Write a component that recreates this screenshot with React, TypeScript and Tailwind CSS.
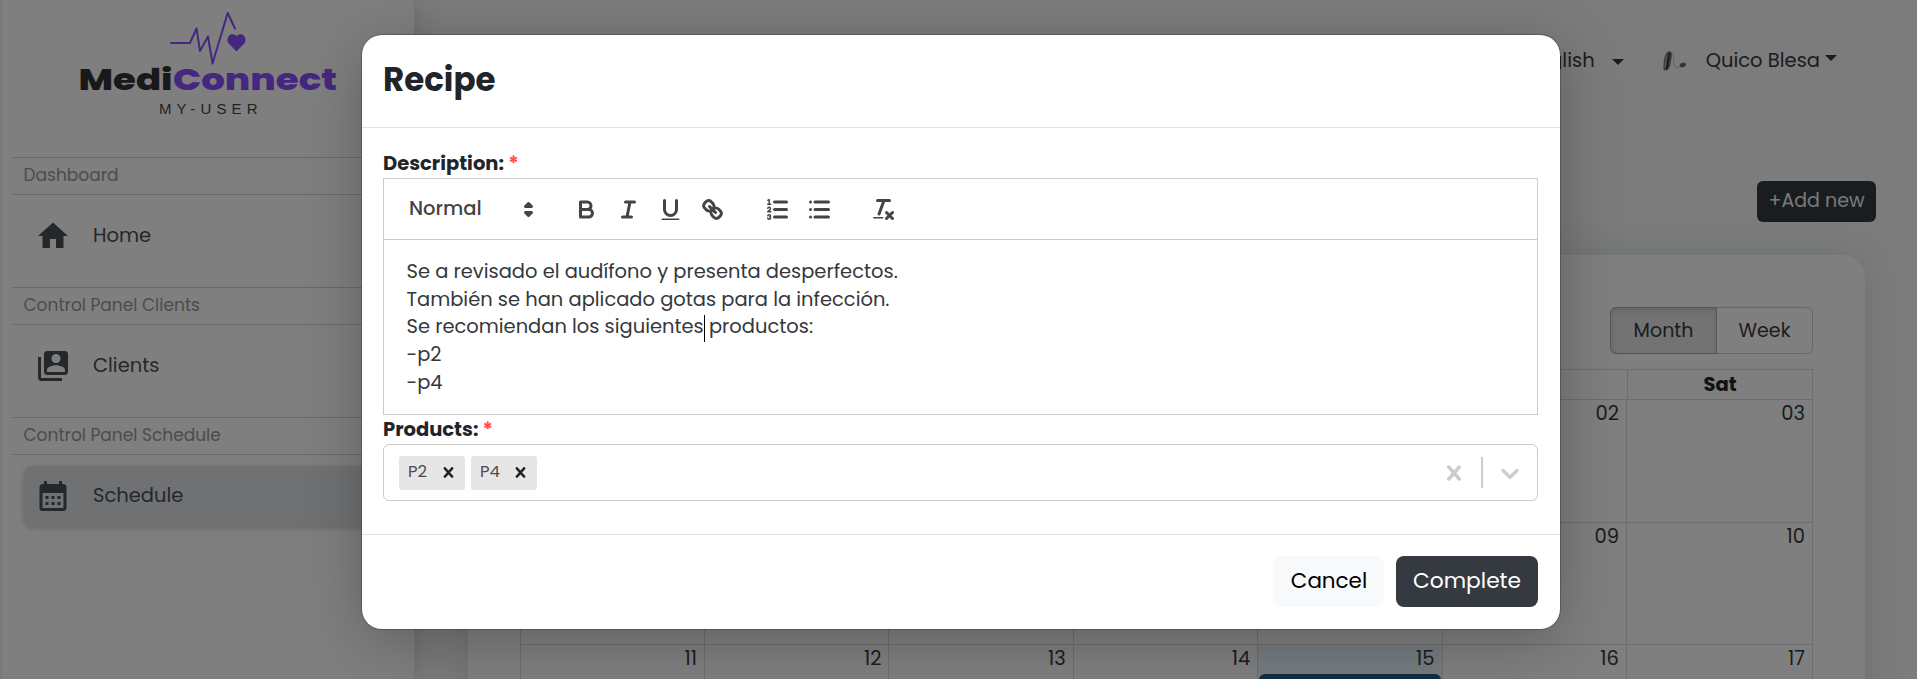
import React from "react";
import { MdHome, MdCalendarMonth } from "react-icons/md";

const SANS = "font-['Poppins','Inter',sans-serif]";

function Logo() {
  return (
    <svg width="280" height="110" viewBox="70 10 280 110" className="block">
      <polyline points="171,43 190,43 196.5,28.5 200,51 208,36.5 212.5,63.5 227.7,13 235,28.5" fill="none" stroke="#8a4fff" strokeWidth="2" strokeLinecap="round" strokeLinejoin="round" />
      <path d="M236.5 51.5l-7.3-7.4c-2.4-2.500-2.300-6.200-.1-8.400 2.100-2.100 5.500-1.900 7.400.5 1.900-2.400 5.300-2.600 7.400-.5 2.200 2.200 2.300 5.900-.1 8.400z" fill="#8a4fff" />
      <text x="78.500" y="90" textLength="94" lengthAdjust="spacingAndGlyphs" fontFamily="Poppins, Inter" fontWeight="800" fontSize="30" fill="#333">Medi</text>
      <text x="173" y="90" textLength="164" lengthAdjust="spacingAndGlyphs" fontFamily="Poppins, Inter" fontWeight="800" fontSize="30" fill="#8a4fff">Connect</text>
      <text x="159" y="114" textLength="98.500" fontFamily="Liberation Sans" fontSize="15" fill="#444">MY-USER</text>
    </svg>
  );
}

function Section({ title, children }: { title: string; children: React.ReactNode }) {
  return (
    <section className="h-[130px]">
      <h2 className="h-[38px] border-y border-[#cfd1d3] pl-[10.500px] text-[17px] leading-[34px] text-[#999]">{title}</h2>
      <div className="pt-[10.500px] pl-[11px]">{children}</div>
    </section>
  );
}

function NavItem({ icon, label, active }: { icon: React.ReactNode; label: string; active?: boolean }) {
  return (
    <div className={"flex h-[60px] items-center rounded-lg pl-[11px] text-[19.500px] text-[#4a4f55] " + (active ? "bg-[#dee2e6] shadow-[0_2px_6px_rgba(0,0,0,0.2)]" : "")}>
      <span className="flex w-[58px] text-[#495057]">{icon}</span>
      {label}
    </div>
  );
}

function ClientsIcon() {
  return (
    <svg width="36" height="36" viewBox="0 0 24 24" fill="currentColor">
      <path d="M4 6H2v14c0 1.100.9 2 2 2h14v-2H4V6zm16-4H8c-1.100 0-2 .9-2 2v12c0 1.100.9 2 2 2h12c1.100 0 2-.9 2-2V4c0-1.100-.9-2-2-2zm-6 2c1.660 0 3 1.340 3 3s-1.340 3-3 3-3-1.340-3-3 1.340-3 3-3zm6 12H8v-1.500c0-1.990 4-3 6-3s6 1.010 6 3V16z" />
    </svg>
  );
}

function Sidebar() {
  return (
    <aside className="z-10 flex w-[414px] shrink-0 flex-col border-l-2 border-[#f0f0f0] bg-white pl-[11px] shadow-[0_0_30px_rgba(60,90,80,0.2)]">
      <div className="h-[157px] pt-[10px] pl-[57px]"><Logo /></div>
      <Section title="Dashboard"><NavItem icon={<MdHome size={36} />} label="Home" /></Section>
      <Section title="Control Panel Clients"><NavItem icon={<ClientsIcon />} label="Clients" /></Section>
      <Section title="Control Panel Schedule"><NavItem active icon={<MdCalendarMonth size={36} />} label="Schedule" /></Section>
    </aside>
  );
}

function Caret() {
  return <span className="block border-x-[6px] border-t-[6px] border-x-transparent border-t-[#343a40]" />;
}

function TopBar() {
  return (
    <header className="flex h-[120px] items-center justify-end pt-[2px] pr-[80px] text-[19.500px] text-[#343a40]">
      <span>English</span>
      <span className="mt-[1px] ml-[17px]"><Caret /></span>
      <svg width="26" height="22" viewBox="0 0 26 22" className="ml-[38px]">
        <path d="M1.500 20C1 12 2.500 3 6 1.500c4-1 4.500 2 3.500 7-1 6-1.500 11-5 12z" fill="#777" />
        <path d="M7.500 3C6 8 6.500 14 4.500 19" stroke="#3a3a3a" strokeWidth="1.800" fill="none" />
        <path d="M5 5C3.500 9 3.500 14 3 18" stroke="#bbb" strokeWidth="1" fill="none" />
        <path d="M10.500 2c3 4-1 14 4 15.500l4-1" stroke="#c4c4c4" fill="none" />
        <ellipse cx="20.800" cy="15" rx="3.200" ry="2.200" transform="rotate(-20 20.800 15)" fill="#666672" />
      </svg>
      <span className="ml-[18px]">Quico Blesa</span>
      <span className="mb-[6px] ml-[5px]"><Caret /></span>
    </header>
  );
}

const WEEKS = [
  ["28", "29", "30", "31", "01", "02", "03"],
  ["04", "05", "06", "07", "08", "09", "10"],
  ["11", "12", "13", "14", "15", "16", "17"],
];

function Calendar() {
  return (
    <div className="ml-[54px] h-[500px] w-[1397px] rounded-[24px] bg-white px-[52px] pt-[52px] text-[19.500px] text-[#373a3c] shadow-[0_0_40px_rgba(60,80,70,0.16)]">
      <div className="flex justify-end">
        <div className="flex h-[47px] w-[203px] rounded-md border border-[#ccc] text-[19px] leading-[45px]">
          <span className="-my-px -ml-px w-[107px] rounded-l-md border border-[#adadad] bg-[#e6e6e6] text-center shadow-[inset_0_3px_5px_rgba(0,0,0,0.125)]">Month</span>
          <span className="flex-1 text-center">Week</span>
        </div>
      </div>
      <div className="mt-[15px] border border-[#ddd]">
        <div className="grid h-[29px] grid-cols-[repeat(6,1fr)_185px] text-center font-bold leading-[29px] text-[#212529]">
          {["Sun", "Mon", "Tue", "Wed", "Thu", "Fri", "Sat"].map((d) => (
            <span key={d} className="border-l border-[#ddd] first:border-l-0">{d}</span>
          ))}
        </div>
        {WEEKS.map((week) => (
          <div key={week[0]} className="grid h-[122.500px] grid-cols-[183px_repeat(5,184.400px)_1fr] border-t border-[#ddd]">
            {week.map((d) => (
              <div key={d} className={"border-l border-[#ddd] text-right leading-[28px] first:border-l-0 " + (d === "15" ? "bg-[#eaf6ff]" : "")}>
                <div className="h-[29px] pr-[7px]">{d}</div>
                {d === "15" && <div className="mr-px ml-px h-[36px] rounded-md bg-[#265985]" />}
              </div>
            ))}
          </div>
        ))}
      </div>
    </div>
  );
}

const stroke = { fill: "none", stroke: "currentColor", strokeWidth: 2, strokeLinecap: "round" as const, strokeLinejoin: "round" as const };
const thin = { ...stroke, strokeWidth: 1 };

function Tool({ children }: { children: React.ReactNode }) {
  return (
    <span className="flex w-[42px] justify-center">
      <svg width="27" height="27" viewBox="0 0 18 18">{children}</svg>
    </span>
  );
}

function Toolbar() {
  return (
    <div className="flex h-[61px] items-center border-b border-[#ccc] pl-[25px] text-[#444]">
      <span className="w-[106px] pb-px text-[19.500px] font-medium">Normal</span>
      <svg width="27" height="27" viewBox="0 0 18 18">
        <g {...stroke} fill="currentColor">
          <polygon points="7 11 9 13 11 11 7 11" />
          <polygon points="7 7 9 5 11 7 7 7" />
        </g>
      </svg>
      <div className="ml-[23px] flex">
        <Tool>
          <path {...stroke} d="M5,4H9.5A2.5,2.5,0,0,1,12,6.5v0A2.5,2.5,0,0,1,9.5,9H5V4Z" />
          <path {...stroke} d="M5,9h5.5A2.5,2.5,0,0,1,13,11.5v0A2.5,2.5,0,0,1,10.5,14H5V9Z" />
        </Tool>
        <Tool>
          <path {...stroke} d="M7 4H13M5 14H11M8 14L10 4" />
        </Tool>
        <Tool>
          <path {...stroke} d="M5,3V9a4.012,4.012,0,0,0,4,4H9a4.012,4.012,0,0,0,4-4V3" />
          <rect fill="currentColor" x="3" y="15" width="12" height="1" rx="0.5" />
        </Tool>
        <Tool>
          <path {...stroke} d="M7 7L11 11" />
          <path {...stroke} d="M8.9,4.577a3.476,3.476,0,0,1,.36,4.679A3.476,3.476,0,0,1,4.577,8.9C3.185,7.5,2.035,6.4,4.217,4.217S7.5,3.185,8.9,4.577Z" />
          <path {...stroke} d="M13.423,9.1a3.476,3.476,0,0,0-4.679-.36,3.476,3.476,0,0,0,.36,4.679c1.392,1.392,2.5,2.542,4.679.36S14.815,10.5,13.423,9.1Z" />
        </Tool>
      </div>
      <div className="ml-[23px] flex">
        <Tool>
          <path {...stroke} d="M7 4H15M7 9H15M7 14H15" />
          <path {...thin} d="M2.500 5.500H4.500" />
          <path fill="currentColor" d="M3.5,6A0.5,0.5,0,0,1,3,5.5V3.085l-0.276.138A0.5,0.5,0,0,1,2.053,3c-0.124-.247-0.023-0.324.224-0.447l1-.5A0.5,0.5,0,0,1,4,2.5v3A0.5,0.5,0,0,1,3.5,6Z" />
          <path {...thin} d="M4.5,10.5h-2c0-.234,1.85-1.076,1.85-2.234A0.959,0.959,0,0,0,2.5,8.156" />
          <path {...thin} d="M2.5,14.846a0.959,0.959,0,0,0,1.85-.109A0.7,0.7,0,0,0,3.75,14a0.688,0.688,0,0,0,.6-0.736,0.959,0.959,0,0,0-1.85-.109" />
        </Tool>
        <Tool>
          <path {...stroke} d="M6 4H15M6 9H15M6 14H15M3 4H3.01M3 9H3.01M3 14H3.01" />
        </Tool>
      </div>
      <div className="ml-[22px] flex">
        <Tool>
          <path {...stroke} d="M5 3H13M6 12L9.35 3M11 11L15 15M15 11L11 15" />
          <rect fill="currentColor" x="2" y="14" width="7" height="1" rx="0.5" />
        </Tool>
      </div>
    </div>
  );
}

const CROSS = "M14.348 14.849c-0.469 0.469-1.229 0.469-1.697 0l-2.651-3.030-2.651 3.029c-0.469 0.469-1.229 0.469-1.697 0-0.469-0.469-0.469-1.229 0-1.697l2.758-3.150-2.759-3.152c-0.469-0.469-0.469-1.228 0-1.697s1.228-0.469 1.697 0l2.652 3.031 2.651-3.031c0.469-0.469 1.228-0.469 1.697 0s0.469 1.229 0 1.697l-2.758 3.152 2.758 3.150c0.469 0.469 0.469 1.229 0 1.698z";
const CHEVRON = "M4.516 7.548c0.436-0.446 1.043-0.481 1.576 0l3.908 3.747 3.908-3.747c0.533-0.481 1.141-0.446 1.574 0 0.436 0.445 0.408 1.197 0 1.615-0.406 0.418-4.695 4.502-4.695 4.502-0.217 0.223-0.502 0.335-0.787 0.335s-0.570-0.112-0.789-0.335c0 0-4.287-4.084-4.695-4.502s-0.436-1.170 0-1.615z";

function Glyph({ d, size }: { d: string; size: number }) {
  return <svg width={size} height={size} viewBox="0 0 20 20" fill="currentColor"><path d={d} /></svg>;
}

function Tag({ label }: { label: string }) {
  return (
    <span className="flex h-[34px] w-[66px] items-center justify-between rounded-[3px] bg-[#e6e6e6] pr-[6px] pl-[9px] text-[16.500px] text-[#4d4d4d]">
      {label}
      <span className="text-[#212529]"><Glyph d={CROSS} size={21} /></span>
    </span>
  );
}

function Label({ children }: { children: string }) {
  return (
    <div className="text-[19.500px] font-bold leading-[29px] text-[#212529]">
      {children} <span className="text-[#ff4d4d]">*</span>
    </div>
  );
}

function Modal() {
  return (
    <div className="mt-[35px] flex h-[594px] w-[1198px] flex-col rounded-[20px] bg-white text-[#212529] shadow-[0_12px_60px_rgba(0,0,0,0.25),0_0_0_1px_rgba(0,0,0,0.2)]">
      <div className="h-[93px] border-b border-[#dee2e6] pt-[21px] pl-[21px] text-[32.500px] font-bold leading-[48px]">Recipe</div>
      <div className="pt-[21px] pr-[22px] pl-[21px]">
        <Label>Description:</Label>
        <div className="h-[237px] border border-[#ccc]">
          <Toolbar />
          <div className="pt-[18px] pl-[22.500px] text-[19.470px] leading-[27.690px] text-[#33373b]">
            <p>Se a revisado el audífono y presenta desperfectos.</p>
            <p>También se han aplicado gotas para la infección.</p>
            <p>Se recomiendan los siguientes<span className="-my-[4px] mr-[-1px] inline-block h-[27px] w-px bg-black align-middle" /> productos:</p>
            <p>-p2</p>
            <p>-p4</p>
          </div>
        </div>
        <Label>Products:</Label>
        <div className="flex h-[57px] items-center rounded-md border border-[#ccc] pl-[15px] text-[#ccc]">
          <div className="flex flex-1 gap-[6px]"><Tag label="P2" /><Tag label="P4" /></div>
          <Glyph d={CROSS} size={30} />
          <span className="mx-[12px] h-[31px] w-[2px] bg-[#ccc]" />
          <span className="pr-[12px]"><Glyph d={CHEVRON} size={30} /></span>
        </div>
      </div>
      <div className="mt-auto flex h-[95px] items-start justify-end gap-[12px] border-t border-[#dee2e6] px-[22px] pt-[21px] text-[21.750px]">
        <button className="h-[51px] w-[110px] rounded-lg bg-[#f8f9fa] text-[21.450px] text-black">Cancel</button>
        <button className="h-[51px] w-[142px] rounded-lg bg-[#343a40] text-white">Complete</button>
      </div>
    </div>
  );
}

export default function App() {
  return (
    <div className={"relative h-[679px] w-full overflow-hidden bg-[#f8f9fa] " + SANS}>
      <div className="flex h-full">
        <Sidebar />
        <main className="flex-1">
          <TopBar />
          <div className="flex h-[135px] items-start justify-end pt-[61px] pr-[41px]">
            <button className="h-[41px] w-[119px] rounded-md bg-[#343a40] pb-px text-[19px] text-[#f0f0f0]">+Add new</button>
          </div>
          <Calendar />
        </main>
      </div>
      <div className="absolute inset-0 z-20 flex items-start bg-black/50 pl-[362px]">
        <Modal />
      </div>
    </div>
  );
}
